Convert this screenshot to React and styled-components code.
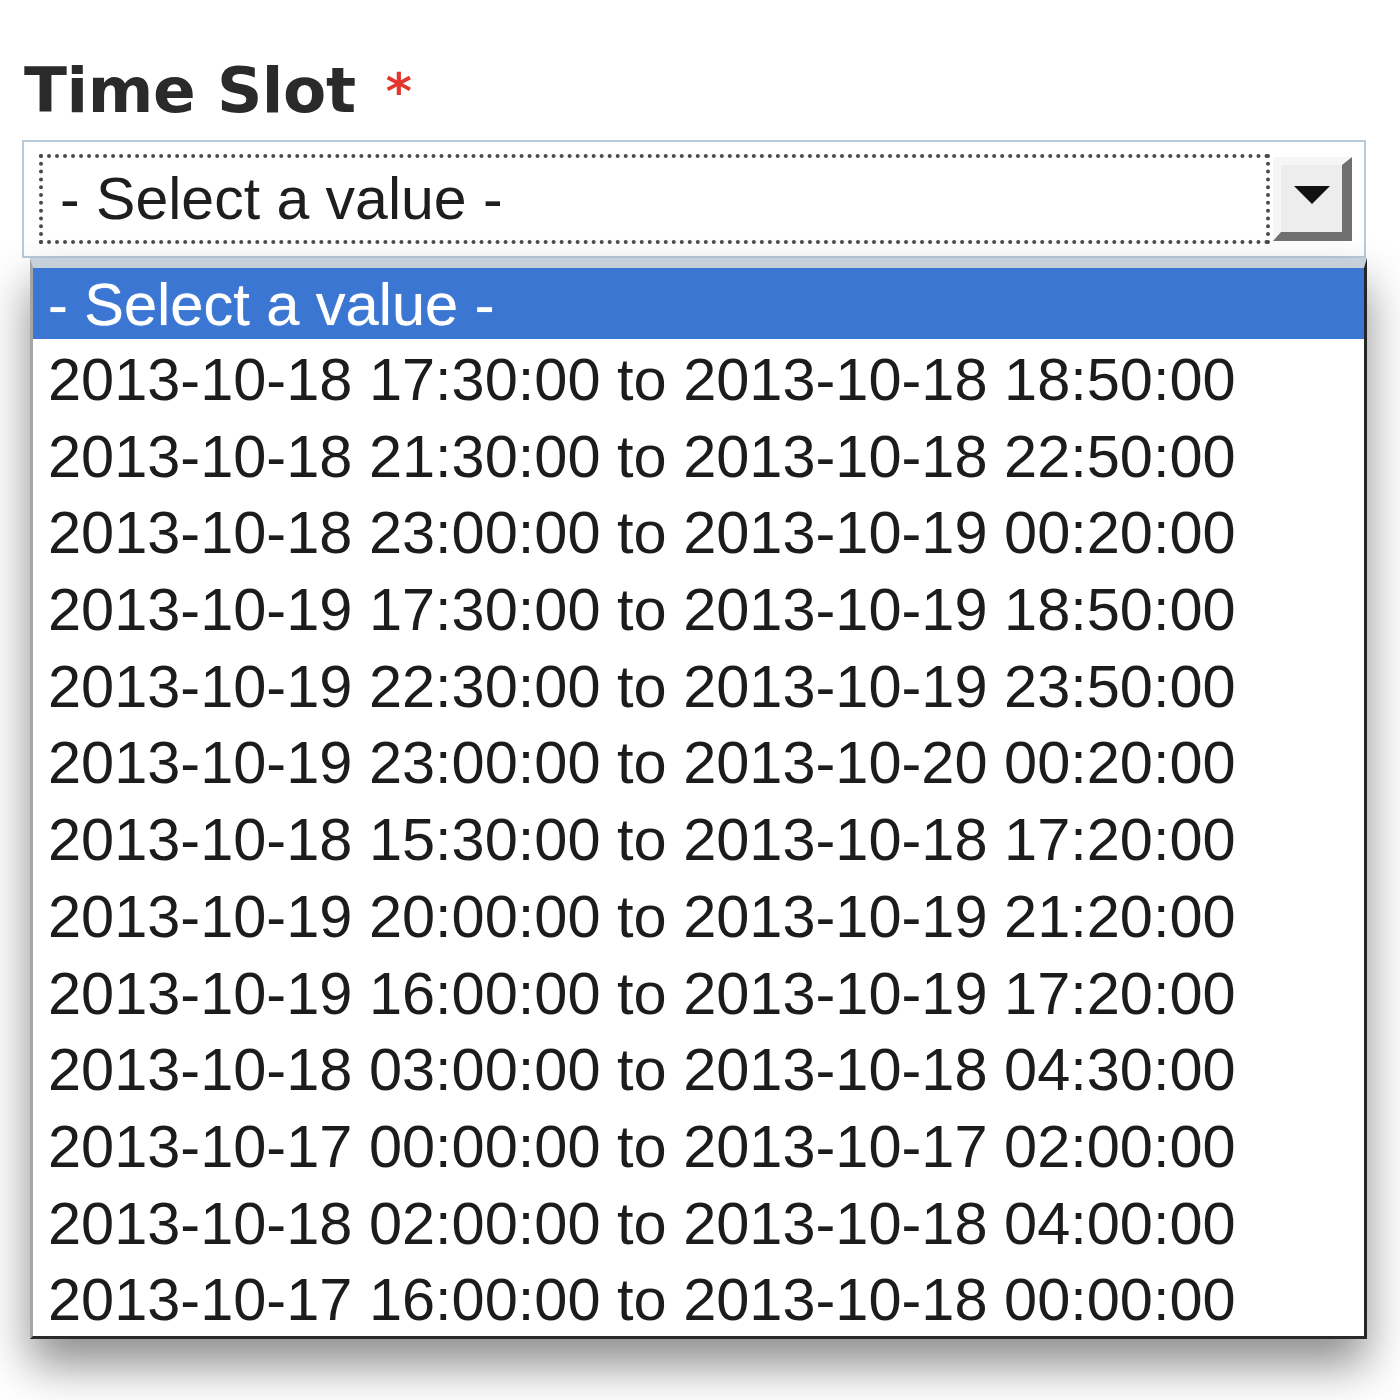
import React from "react";
import styled, { createGlobalStyle } from "styled-components";

const Global = createGlobalStyle`
  html, body { margin: 0; padding: 0; background: #ffffff; }
  body { font-family: "Liberation Sans", Arial, sans-serif; }
`;

const Page = styled.div`
  width: 1400px;
  height: 1400px;
  box-sizing: border-box;
  padding: 53px 0 0 22px;
  overflow: hidden;
`;

const Label = styled.label`
  display: block;
  margin-left: 2px;
  font-family: "DejaVu Sans", "Liberation Sans", sans-serif;
  font-weight: bold;
  font-size: 63px;
  line-height: 75px;
  letter-spacing: -0.4px;
  color: #2a2a2a;
`;

const Required = styled.span`
  color: #e2362e;
  font-size: 50px;
  vertical-align: top;
  margin-left: 30px;
  position: relative;
  top: 2px;
`;

const SelectBox = styled.div`
  margin-top: 12px;
  width: 1344px;
  height: 118px;
  box-sizing: border-box;
  border: 2px solid #b9cadb;
  background: #fff;
  display: flex;
  align-items: center;
  gap: 3px;
  padding: 0 12px 1px 15px;
`;

const FocusRing = styled.div`
  flex: 1;
  height: 90px;
  box-sizing: border-box;
  border: 4px dotted #4a4a4a;
  display: flex;
  align-items: center;
  padding-left: 17px;
  font-size: 59px;
  color: #1e1e1e;
`;

const ArrowButton = styled.div`
  width: 79px;
  height: 84px;
  box-sizing: border-box;
  border-style: solid;
  border-width: 8px 10px 9px 8px;
  border-color: #f6f6f6 #707070 #707070 #f6f6f6;
  background: #ededed;
  display: flex;
  align-items: center;
  justify-content: center;
  padding-bottom: 6px;
`;

const List = styled.ul`
  list-style: none;
  margin: 0 0 0 8px;
  padding: 0;
  width: 1337px;
  box-sizing: border-box;
  background: #ffffff;
  border-top: 10px solid #c6d0db;
  border-left: 3px solid #a6a6a6;
  border-right: 3px solid #262626;
  border-bottom: 3px solid #2a2a2a;
  box-shadow: 0 26px 44px rgba(0, 0, 0, 0.45);
`;

const Option = styled.li`
  box-sizing: border-box;
  height: ${(p) => (p.$selected ? "71px" : "76.7px")};
  line-height: ${(p) => (p.$selected ? "69px" : "70px")};
  padding: ${(p) => (p.$selected ? "2px 0 0 15px" : "6px 0 0 15px")};
  font-size: 59.5px;
  white-space: nowrap;
  color: ${(p) => (p.$selected ? "#ffffff" : "#1c1c1c")};
  background: ${(p) => (p.$selected ? "#3a76d2" : "transparent")};
  text-shadow: ${(p) => (p.$selected ? "0 0 1px rgba(255,255,255,0.8)" : "none")};
`;

const slots = [
  "2013-10-18 17:30:00 to 2013-10-18 18:50:00",
  "2013-10-18 21:30:00 to 2013-10-18 22:50:00",
  "2013-10-18 23:00:00 to 2013-10-19 00:20:00",
  "2013-10-19 17:30:00 to 2013-10-19 18:50:00",
  "2013-10-19 22:30:00 to 2013-10-19 23:50:00",
  "2013-10-19 23:00:00 to 2013-10-20 00:20:00",
  "2013-10-18 15:30:00 to 2013-10-18 17:20:00",
  "2013-10-19 20:00:00 to 2013-10-19 21:20:00",
  "2013-10-19 16:00:00 to 2013-10-19 17:20:00",
  "2013-10-18 03:00:00 to 2013-10-18 04:30:00",
  "2013-10-17 00:00:00 to 2013-10-17 02:00:00",
  "2013-10-18 02:00:00 to 2013-10-18 04:00:00",
  "2013-10-17 16:00:00 to 2013-10-18 00:00:00",
];

export default function App() {
  return (
    <Page>
      <Global />
      <Label>
        Time Slot<Required>*</Required>
      </Label>
      <SelectBox>
        <FocusRing>- Select a value -</FocusRing>
        <ArrowButton>
          <svg width="36" height="18" viewBox="0 0 36 18">
            <polygon points="0,0 36,0 18,18" fill="#111" />
          </svg>
        </ArrowButton>
      </SelectBox>
      <List>
        <Option $selected>- Select a value -</Option>
        {slots.map((s, i) => (
          <Option key={i}>{s}</Option>
        ))}
      </List>
    </Page>
  );
}
